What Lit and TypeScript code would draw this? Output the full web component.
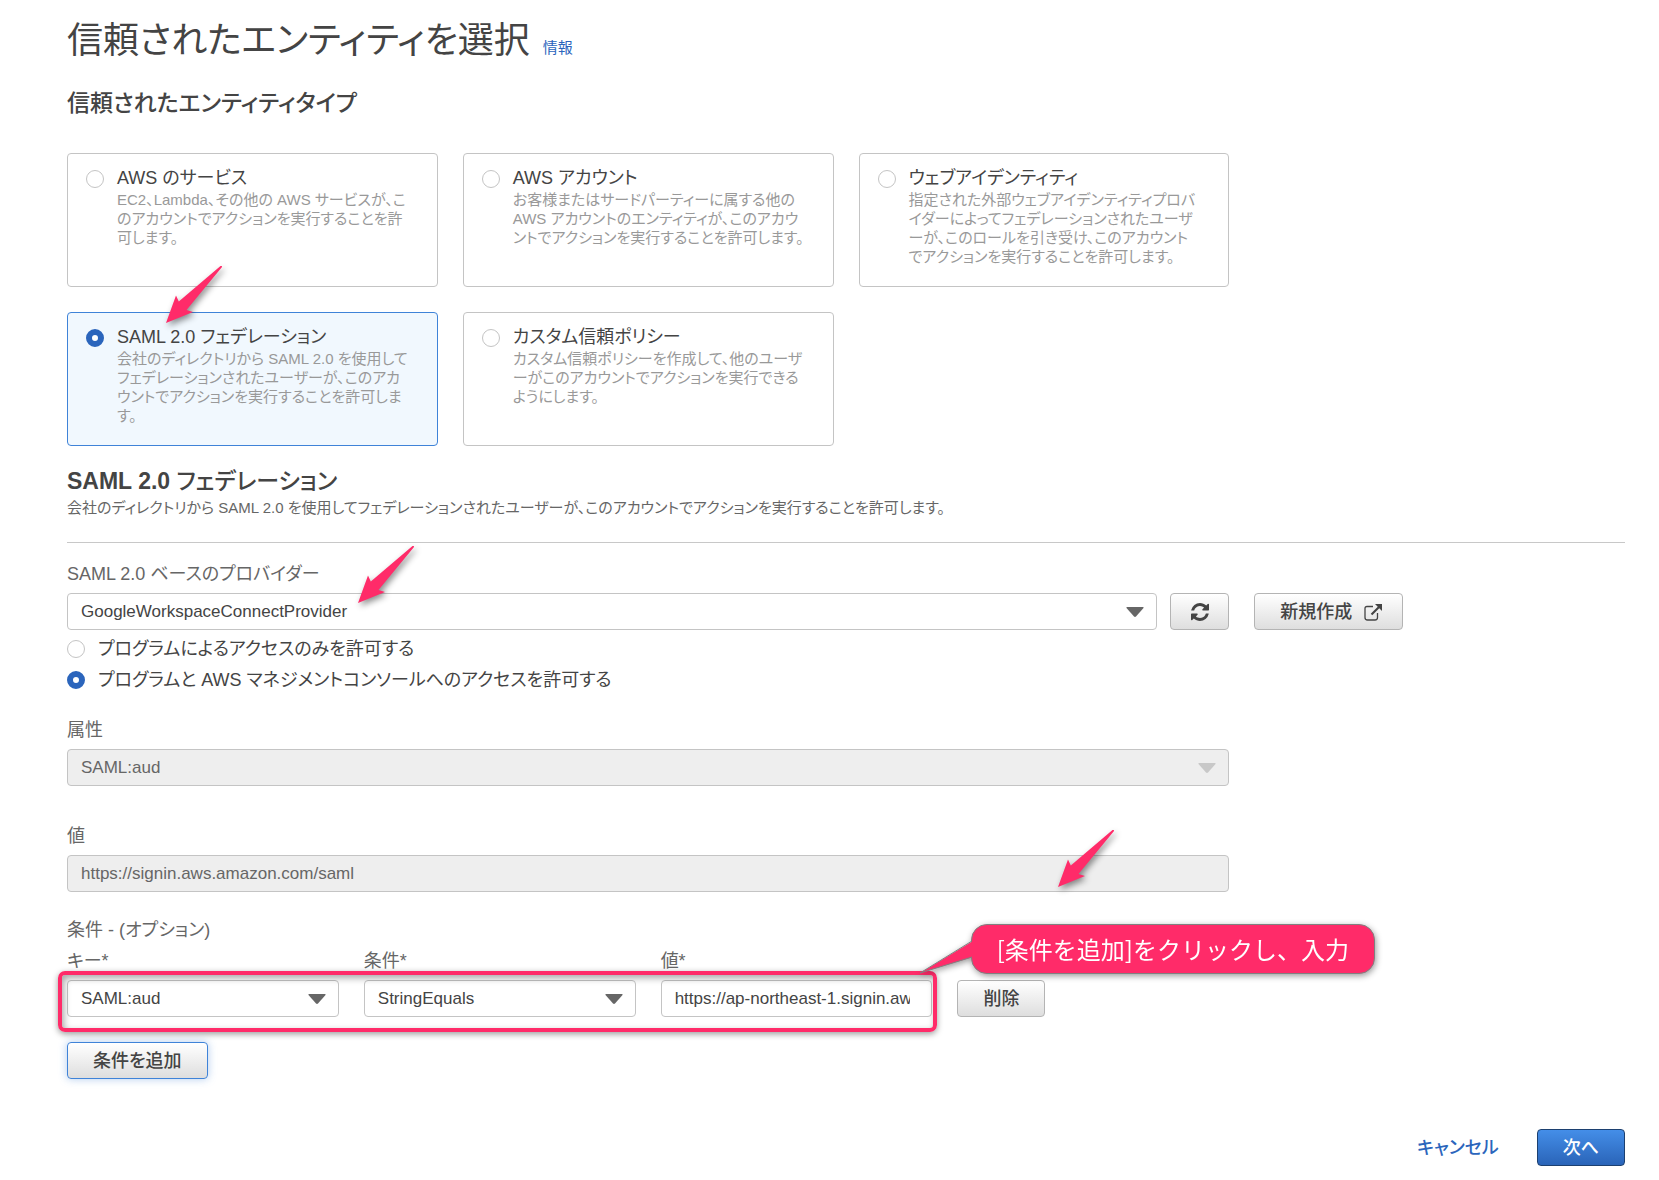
import { LitElement, html, css, svg } from "lit";
import { customElement, property, state } from "lit/decorators.js";

interface EntityType {
  id: string;
  title: string;
  text: string;
}

const ENTITY_TYPES: EntityType[] = [
  { id: "service", title: "AWS のサービス", text: "EC2、Lambda、その他の AWS サービスが、このアカウントでアクションを実行することを許可します。" },
  { id: "account", title: "AWS アカウント", text: "お客様またはサードパーティーに属する他の AWS アカウントのエンティティが、このアカウントでアクションを実行することを許可します。" },
  { id: "web", title: "ウェブアイデンティティ", text: "指定された外部ウェブアイデンティティプロバイダーによってフェデレーションされたユーザーが、このロールを引き受け、このアカウントでアクションを実行することを許可します。" },
  { id: "saml", title: "SAML 2.0 フェデレーション", text: "会社のディレクトリから SAML 2.0 を使用してフェデレーションされたユーザーが、このアカウントでアクションを実行することを許可します。" },
  { id: "custom", title: "カスタム信頼ポリシー", text: "カスタム信頼ポリシーを作成して、他のユーザーがこのアカウントでアクションを実行できるようにします。" },
];

const controls = css`
  * {
    box-sizing: border-box;
  }
  input,
  select,
  button {
    margin: 0;
    font: inherit;
    font-feature-settings: inherit;
    color: inherit;
  }
  .radio {
    appearance: none;
    flex: none;
    width: 18px;
    height: 18px;
    border: 1px solid #c4c4c4;
    border-radius: 50%;
    background: #fff;
  }
  .radio:checked {
    border: 6px solid #2b65bc;
  }
`;

/** Pointer arrow; its tip sits at the lower left corner of the box. */
@customElement("pointer-arrow")
export class PointerArrow extends LitElement {
  static styles = css`
    :host {
      display: block;
      width: 57px;
      height: 58px;
      pointer-events: none;
    }
    svg {
      display: block;
      overflow: visible;
      filter: drop-shadow(2px 3px 3px rgba(0, 0, 0, 0.45));
    }
  `;
  render() {
    return html`<svg width="57" height="58" viewBox="0 0 57 58" aria-hidden="true">
      <path d="M0 58 L10 30.5 L12.8 36.5 L54.5 1 Q56.5 0.5 56 2 L20.5 45 L27 47 Z" fill="#ff2b69" />
    </svg>`;
  }
}

@customElement("select-field")
export class SelectField extends LitElement {
  @property() value = "";
  @property() name = "";
  @property({ type: Boolean }) disabled = false;

  static styles = [
    controls,
    css`
      :host {
        display: block;
      }
      .wrap {
        display: grid;
        align-items: center;
      }
      .box {
        grid-area: 1 / 1;
        appearance: none;
        width: 100%;
        height: 37px;
        padding: 0 40px 0 13px;
        border: 1px solid #c4c4c4;
        border-radius: 4px;
        background: #fff;
        color: #444;
        font-size: 17px;
        opacity: 1;
      }
      .box:disabled {
        background: #eee;
        color: #666;
      }
      .caret {
        grid-area: 1 / 1;
        justify-self: end;
        margin-right: 13px;
        fill: #666;
        pointer-events: none;
      }
      .caret.off {
        fill: #c8c8c8;
      }
    `,
  ];
  render() {
    return html`<div class="wrap">
      <select class="box" aria-label=${this.name} ?disabled=${this.disabled}>
        <option selected>${this.value}</option>
      </select>
      <svg class="caret ${this.disabled ? "off" : ""}" width="18" height="10" viewBox="0 0 18 10" aria-hidden="true">
        <path d="M1 0h16q1 0 .5 1L10 9.500q-1 .8-2 0L.5 1Q0 0 1 0z" />
      </svg>
    </div>`;
  }
}

const refreshIcon = svg`<path fill="#444" d="M1511 928q0 5-1 7-64 268-268 434.5t-478 166.500q-146 0-282.5-55t-243.5-157l-129 129q-19 19-45 19t-45-19-19-45v-448q0-26 19-45t45-19h448q26 0 45 19t19 45-19 45l-137 137q71 66 161 102t187 36q134 0 250-65t186-179q11-17 53-117 8-23 30-23h192q13 0 22.500 9.500t9.500 22.500zm25-800v448q0 26-19 45t-45 19h-448q-26 0-45-19t-19-45 19-45l138-138q-148-137-349-137-134 0-250 65t-186 179q-11 17-53 117-8 23-30 23h-199q-13 0-22.500-9.500t-9.500-22.500v-7q65-268 270-434.500t480-166.500q146 0 284 55.500t245 156.500l130-129q19-19 45-19t45 19 19 45z"/>`;

@customElement("app-root")
export class AppRoot extends LitElement {
  @state() private entity = "saml";
  @state() private access = "console";

  static styles = [
    controls,
    css`
      :host {
        display: block;
        min-height: 100vh;
        background: #fff;
        color: #444;
        font-family: "Liberation Sans", "Noto Sans CJK JP", sans-serif;
        font-size: 18px;
        line-height: 24px;
        font-feature-settings: "palt";
      }
      .page {
        padding: 17px 34px 13px 67px;
      }
      h1,
      h2,
      p {
        margin: 0;
      }
      .title {
        display: flex;
        align-items: baseline;
        gap: 13px;
      }
      h1 {
        font-size: 36px;
        line-height: 48px;
        font-weight: 400;
      }
      .info {
        font-size: 15px;
      }
      a {
        color: #2b65bc;
        text-decoration: none;
      }
      h2 {
        font-size: 23px;
        line-height: 28px;
        font-weight: 700;
      }
      .jp {
        font-weight: 500;
      }
      .type-head {
        margin-top: 24px;
      }
      .columns {
        display: grid;
        grid-template-columns: repeat(12, minmax(0, 1fr));
        column-gap: 25px;
      }
      .main {
        grid-column: span 9;
      }
      .aside {
        grid-column: span 3;
      }
      .cards {
        display: grid;
        grid-template-columns: repeat(3, minmax(0, 1fr));
        gap: 25px;
        margin-top: 36px;
      }
      .card {
        position: relative;
        display: flex;
        gap: 13px;
        min-height: 134px;
        padding: 12px 27px 12px 18px;
        border: 1px solid #c4c4c4;
        border-radius: 4px;
      }
      .card .radio {
        margin-top: 4px;
      }
      .card.on {
        border-color: #3f83d8;
        background: #f1f8fe;
      }
      .card-text {
        display: block;
        font-size: 15px;
        line-height: 19px;
        color: #999;
      }
      .saml-head {
        margin-top: 21px;
      }
      .lead {
        padding-bottom: 21px;
        border-bottom: 1px solid #c8c8c8;
        font-size: 15px;
        line-height: 26px;
        color: #666;
      }
      .label {
        display: block;
        margin-bottom: 7px;
        color: #666;
      }
      .provider {
        margin-top: 19px;
        align-items: end;
      }
      .provider-row {
        position: relative;
        display: flex;
        gap: 13px;
      }
      .grow {
        flex: 1;
        min-width: 0;
      }
      .btn {
        display: inline-flex;
        align-items: center;
        justify-content: center;
        height: 37px;
        padding: 0 25px;
        border: 1px solid #b4b4b4;
        border-radius: 4px;
        background: linear-gradient(#fff, #dedede);
        font-weight: 500;
        line-height: 24px;
      }
      .btn.refresh {
        width: 59px;
        padding: 0;
      }
      .btn.new {
        gap: 12px;
        padding: 0 20px 0 25px;
      }
      .btn.focused {
        border-color: #3f83d8;
        box-shadow: 0 0 8px rgba(63, 131, 216, 0.4);
      }
      .btn.next {
        border-color: #1c4070;
        background: linear-gradient(#448ee8, #2a64b8);
        color: #fff;
      }
      .options {
        display: grid;
        gap: 7px;
        margin-top: 7px;
      }
      .option {
        display: flex;
        align-items: center;
        gap: 13px;
      }
      .field {
        margin-top: 26px;
      }
      .field.far {
        margin-top: 38px;
      }
      .field-box {
        position: relative;
      }
      .text {
        display: block;
        width: 100%;
        height: 37px;
        padding: 0 21px 0 13px;
        border: 1px solid #c4c4c4;
        border-radius: 4px;
        background: #fff;
        color: #444;
        font-size: 17px;
      }
      .text:disabled {
        background: #eee;
        color: #666;
      }
      .conditions {
        position: relative;
        display: grid;
        grid-template-columns: repeat(4, minmax(0, 1fr));
        column-gap: 25px;
        align-items: end;
        justify-items: start;
        margin-bottom: 25px;
      }
      .conditions .cell {
        width: 100%;
      }
      .frame {
        position: absolute;
        left: -9px;
        right: 292px;
        bottom: -15px;
        height: 61px;
        border: 4px solid #ff2b69;
        border-radius: 7px;
        box-shadow: 0 2px 6px rgba(0, 0, 0, 0.4), inset 2px 3px 7px rgba(0, 0, 0, 0.35);
        pointer-events: none;
      }
      .callout {
        position: absolute;
        left: calc(75% + 32px);
        bottom: 43px;
        height: 50px;
        padding: 0 25px;
        border: 1px solid #808080;
        border-radius: 16px;
        background: #ff2b69;
        color: #fff;
        font-size: 24px;
        line-height: 48px;
        font-weight: 400;
        white-space: nowrap;
        font-family: "Noto Sans CJK JP", sans-serif;
        font-feature-settings: normal;
        filter: drop-shadow(1px 2px 3px rgba(0, 0, 0, 0.4));
      }
      .tail {
        position: absolute;
        right: 100%;
        top: 15px;
        margin-right: -1px;
        overflow: visible;
      }
      pointer-arrow {
        position: absolute;
      }
      .at-card {
        left: 98px;
        bottom: 122px;
      }
      .at-provider {
        left: 291px;
        bottom: 27px;
      }
      .at-value {
        right: 114px;
        bottom: 5px;
      }
      .footer {
        display: flex;
        justify-content: flex-end;
        align-items: center;
        gap: 38px;
        margin-top: 50px;
      }
      .cancel {
        font-weight: 500;
      }
    `,
  ];

  private card(t: EntityType) {
    const on = this.entity === t.id;
    return html`<label class="card ${on ? "on" : ""}">
      <input class="radio" type="radio" name="entity" .checked=${on} @change=${() => (this.entity = t.id)} />
      <span><span>${t.title}</span><span class="card-text">${t.text}</span></span>
      ${t.id === "saml" ? html`<pointer-arrow class="at-card"></pointer-arrow>` : null}
    </label>`;
  }

  private option(id: string, text: string) {
    return html`<label class="option">
      <input class="radio" type="radio" name="access" .checked=${this.access === id} @change=${() => (this.access = id)} />
      <span>${text}</span>
    </label>`;
  }

  render() {
    return html`<main class="page" lang="ja">
      <div class="title">
        <h1>信頼されたエンティティを選択</h1>
        <a class="info" href="#info">情報</a>
      </div>
      <h2 class="jp type-head">信頼されたエンティティタイプ</h2>
      <div class="columns">
        <div class="main cards">${ENTITY_TYPES.map((t) => this.card(t))}</div>
      </div>

      <h2 class="saml-head">SAML 2.0 <span class="jp">フェデレーション</span></h2>
      <p class="lead">会社のディレクトリから SAML 2.0 を使用してフェデレーションされたユーザーが、このアカウントでアクションを実行することを許可します。</p>

      <div class="columns provider">
        <div class="main">
          <span class="label">SAML 2.0 ベースのプロバイダー</span>
          <div class="provider-row">
            <select-field class="grow" name="SAML 2.0 ベースのプロバイダー" value="GoogleWorkspaceConnectProvider"></select-field>
            <button class="btn refresh" aria-label="更新">
              <svg width="18" height="18" viewBox="0 0 1536 1536" aria-hidden="true">${refreshIcon}</svg>
            </button>
            <pointer-arrow class="at-provider"></pointer-arrow>
          </div>
        </div>
        <div class="aside">
          <button class="btn new">
            新規作成
            <svg width="18" height="18" viewBox="0 0 18 18" fill="none" stroke="#444" aria-hidden="true">
              <path d="M9 3.500H3Q1 3.500 1 5.500v9Q1 17 3.500 17H11q2.500 0 2.500-2.500V10" stroke-width="1.300" />
              <path d="M7.500 11.500L15 4" stroke-width="2.200" />
              <path d="M11 1h7v7z" fill="#444" stroke="none" />
            </svg>
          </button>
        </div>
      </div>

      <div class="options">
        ${this.option("program", "プログラムによるアクセスのみを許可する")}
        ${this.option("console", "プログラムと AWS マネジメントコンソールへのアクセスを許可する")}
      </div>

      <div class="columns">
        <div class="main">
          <div class="field">
            <span class="label">属性</span>
            <select-field name="属性" value="SAML:aud" disabled></select-field>
          </div>
          <div class="field far">
            <label class="label" for="value">値</label>
            <div class="field-box">
              <input id="value" class="text" value="https://signin.aws.amazon.com/saml" disabled />
              <pointer-arrow class="at-value"></pointer-arrow>
            </div>
          </div>
          <div class="field">
            <span class="label">条件 - (オプション)</span>
            <div class="conditions">
              <div class="cell">
                <span class="label">キー*</span>
                <select-field name="キー" value="SAML:aud"></select-field>
              </div>
              <div class="cell">
                <span class="label">条件*</span>
                <select-field name="条件" value="StringEquals"></select-field>
              </div>
              <div class="cell">
                <label class="label" for="cond-value">値*</label>
                <input id="cond-value" class="text" value="https://ap-northeast-1.signin.aws.amazon.com/saml" />
              </div>
              <button class="btn">削除</button>
              <div class="frame"></div>
              <div class="callout">
                <svg class="tail" width="53" height="34" viewBox="0 0 53 34" aria-hidden="true">
                  <path d="M53 1L0 33L53 17z" fill="#ff2b69" />
                  <path d="M52 1L0 33L52 17" fill="none" stroke="#808080" />
                </svg>
                [条件を追加]をクリックし、入力
              </div>
            </div>
            <button class="btn focused">条件を追加</button>
          </div>
        </div>
      </div>

      <div class="footer">
        <a class="cancel" href="#cancel">キャンセル</a>
        <button class="btn next">次へ</button>
      </div>
    </main>`;
  }
}
